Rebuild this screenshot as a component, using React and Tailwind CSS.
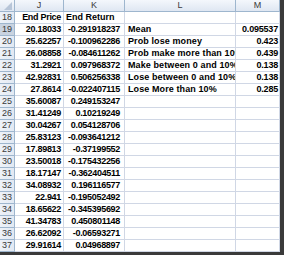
import React from "react";

const rows = [
  [18, "End Price", "End Return", "", ""],
  [19, "20.18033", "-0.291918237", "Mean", "0.095537"],
  [20, "25.62257", "-0.100962286", "Prob lose money", "0.423"],
  [21, "26.08858", "-0.084611262", "Prob make more than 10%", "0.439"],
  [22, "31.2921", "0.097968372", "Make between 0 and 10%", "0.138"],
  [23, "42.92831", "0.506256338", "Lose between 0 and 10%", "0.138"],
  [24, "27.8614", "-0.022407115", "Lose More than 10%", "0.285"],
  [25, "35.60087", "0.249153247", "", ""],
  [26, "31.41249", "0.10219249", "", ""],
  [27, "30.04267", "0.054128706", "", ""],
  [28, "25.83123", "-0.093641212", "", ""],
  [29, "17.89813", "-0.37199552", "", ""],
  [30, "23.50018", "-0.175432256", "", ""],
  [31, "18.17147", "-0.362404511", "", ""],
  [32, "34.08932", "0.196116577", "", ""],
  [33, "22.941", "-0.195052492", "", ""],
  [34, "18.65622", "-0.345395692", "", ""],
  [35, "41.34783", "0.450801148", "", ""],
  [36, "26.62092", "-0.06593271", "", ""],
  [37, "29.91614", "0.04968897", "", ""],
];

const cell =
  "h-[12px] border-r border-b border-[#d0d7e5] overflow-hidden whitespace-nowrap leading-[11px] text-[9px] font-bold text-black";
const head =
  "h-[12px] border-r border-b border-[#9eb6ce] bg-gradient-to-b from-[#f4f7fc] to-[#dfe7f2] text-[9px] leading-[11px] text-[#3a3a3a] text-center";

export default function App() {
  return (
    <div
      className="w-[284px] h-[255px] bg-white border-r-4 border-b-[3px] border-[#3a3a3a] overflow-hidden"
      style={{ fontFamily: '"Liberation Sans", Arial, sans-serif' }}
    >
      <div className="grid grid-cols-[15px_49px_61px_111px_44px]">
        <div className={head + " flex items-end justify-end pr-[2px] pb-[1px]"}>
          <svg width="8" height="8" viewBox="0 0 8 8">
            <polygon points="8,0 8,8 0,8" fill="#b7c5d8" />
          </svg>
        </div>
        <div className={head}>J</div>
        <div className={head}>K</div>
        <div className={head}>L</div>
        <div className={head}>M</div>
        {rows.map(([n, j, k, l, m]) => (
          <React.Fragment key={n}>
            <div
              className={
                "h-[12px] border-r border-b border-[#9eb6ce] text-[9px] leading-[11px] text-center text-[#3a3a3a] " +
                (n === 19
                  ? "bg-[#c9d3e0]"
                  : "bg-gradient-to-r from-[#eef2f8] to-[#e2e9f3]")
              }
            >
              {n}
            </div>
            <div className={cell + " text-right pr-[2px] tracking-[-0.3px]"}>{j}</div>
            <div
              className={
                cell +
                (n === 18
                  ? " text-left pl-[2px]"
                  : " text-right pr-[4px] tracking-[-0.3px]")
              }
            >
              {k}
            </div>
            <div className={cell + " text-left pl-[3px] tracking-[0.1px]"}>{l}</div>
            <div className={cell + " text-right pr-[1px] tracking-[-0.2px]"}>{m}</div>
          </React.Fragment>
        ))}
      </div>
    </div>
  );
}
